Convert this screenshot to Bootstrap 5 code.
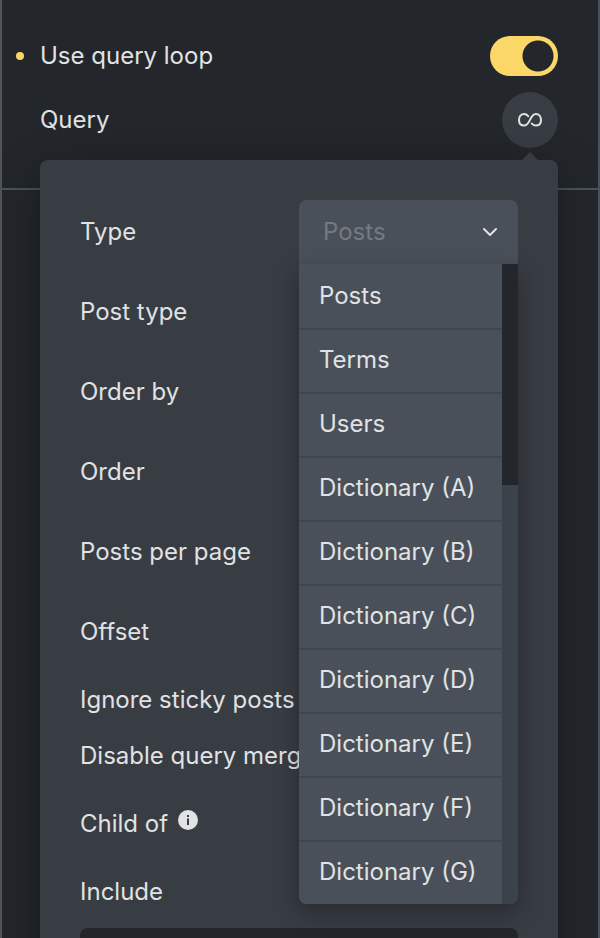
<!DOCTYPE html>
<html lang="en">
<head>
<meta charset="utf-8">
<meta name="viewport" content="width=device-width, initial-scale=1">
<title>Query loop settings</title>
<link href="https://cdn.jsdelivr.net/npm/bootstrap@5.3.0/dist/css/bootstrap.min.css" rel="stylesheet">
<style>
  :root { --ink: #e0e2e4; --base: #23272b; --raised: #383c43; --field: #495059; --line: #49525c; --accent: #fad766; }
  body { background: var(--base); color: var(--ink); font: 400 24px/32px Inter, "Liberation Sans", sans-serif; font-optical-sizing: none; }
  .panel { background: linear-gradient(#50555a, #50555a) left / 2px 100% no-repeat; border-right: 2px solid var(--line); }
  .panel-head { padding: 36px 40px 40px 40px; border-bottom: 2px solid var(--line); gap: 16px; }
  .marker { width: 8px; height: 8px; border-radius: 50%; background: var(--accent); left: -24px; top: 12px; }
  .toggle.form-check-input { width: 68px; height: 40px; margin: 0; border: 0; border-radius: 20px; background: radial-gradient(circle 16px at calc(100% - 20px) 50%, var(--base) 15px, transparent 16px) var(--accent); }
  .toggle.form-check-input:not(:checked) { background: radial-gradient(circle 16px at 20px 50%, var(--base) 15px, transparent 16px) var(--field); }
  .btn-query { width: 56px; height: 56px; background: var(--raised); color: var(--ink); }
  .btn-query:hover { background: var(--field); color: var(--ink); }
  .pop { top: 100%; left: 0; right: 0; margin-top: 12px; padding: 40px; gap: 16px; border-radius: 8px; background: var(--raised); box-shadow: 0 8px 40px rgba(0,0,0,.35); z-index: 2; }
  .pop::before { content: ""; position: absolute; right: 20px; bottom: 100%; border: 8px solid transparent; border-top: 0; border-bottom-color: var(--raised); }
  .tall { height: 64px; }
  .short { height: 40px; }
  .with-info { gap: 10px; }
  .type-select.form-select { height: 64px; padding: 0 56px 0 24px; border: 0; border-radius: 8px 8px 0 0; background: var(--field); color: #747a82; font-size: 24px; line-height: 32px; }
  .chevron { right: 20px; top: 24px; pointer-events: none; }
  .menu { top: 100%; left: 0; right: 0; border-radius: 0 0 8px 8px; overflow: hidden; background: var(--field); box-shadow: 0 8px 24px rgba(0,0,0,.3); z-index: 3; }
  .menu .list-group-item { height: 64px; padding: 0 20px; border: 0; background: var(--field); color: var(--ink); }
  .menu .list-group-item + .list-group-item { box-shadow: inset 0 2px #41474f; }
  .track { width: 16px; background: #3a424a; }
  .thumb { height: 221px; background: var(--base); }
  .include.form-control { height: 64px; border: 0; border-radius: 8px; background: var(--base); color: var(--ink); }
</style>
</head>
<body>
<main class="panel vh-100 overflow-hidden">
  <section class="panel-head d-flex flex-column">
    <div class="d-flex align-items-center justify-content-between">
      <label class="position-relative" for="loop"><span class="marker position-absolute"></span>Use query loop</label>
      <input class="toggle form-check-input" type="checkbox" role="switch" id="loop" checked>
    </div>
    <div class="position-relative d-flex align-items-center justify-content-between">
      <span id="queryLabel">Query</span>
      <button class="btn btn-query rounded-circle border-0 p-0 d-flex align-items-center justify-content-center" type="button" aria-labelledby="queryLabel" aria-expanded="true">
        <svg width="26" height="16" viewBox="0 0 26 16" fill="none" stroke="currentColor" stroke-width="2" stroke-linecap="round" aria-hidden="true"><path d="M11.2 4.2C9.9 2.7 8.7 2.1 7.2 2.1C4 2.1 2 4.6 2 8S4 13.6 7.2 13.6C13 13.6 13 2.1 18.8 2.1C22 2.1 24 4.6 24 8S22 13.6 18.8 13.6C17.3 13.6 16.1 13 14.8 11.6"/></svg>
      </button>
      <div class="pop position-absolute d-flex flex-column">
        <div class="row g-0 tall align-items-center">
          <label class="col-6" for="type">Type</label>
          <div class="col-6 position-relative">
            <select class="type-select form-select" id="type"><option>Posts</option><option>Terms</option><option>Users</option></select>
            <svg class="chevron position-absolute" width="16" height="16" viewBox="0 0 16 16" fill="none" stroke="currentColor" stroke-width="2" stroke-linecap="round" stroke-linejoin="round" aria-hidden="true"><path d="M2 5l6 6 6-6"/></svg>
            <div class="menu position-absolute d-flex">
              <div class="list-group list-group-flush flex-grow-1">
                <button type="button" class="list-group-item list-group-item-action">Posts</button>
                <button type="button" class="list-group-item list-group-item-action">Terms</button>
                <button type="button" class="list-group-item list-group-item-action">Users</button>
                <button type="button" class="list-group-item list-group-item-action">Dictionary (A)</button>
                <button type="button" class="list-group-item list-group-item-action">Dictionary (B)</button>
                <button type="button" class="list-group-item list-group-item-action">Dictionary (C)</button>
                <button type="button" class="list-group-item list-group-item-action">Dictionary (D)</button>
                <button type="button" class="list-group-item list-group-item-action">Dictionary (E)</button>
                <button type="button" class="list-group-item list-group-item-action">Dictionary (F)</button>
                <button type="button" class="list-group-item list-group-item-action">Dictionary (G)</button>
              </div>
              <div class="track flex-shrink-0"><div class="thumb"></div></div>
            </div>
          </div>
        </div>
        <div class="tall d-flex align-items-center">Post type</div>
        <div class="tall d-flex align-items-center">Order by</div>
        <div class="tall d-flex align-items-center">Order</div>
        <div class="tall d-flex align-items-center">Posts per page</div>
        <div class="tall d-flex align-items-center">Offset</div>
        <div class="short d-flex align-items-center text-nowrap">Ignore sticky posts</div>
        <div class="short d-flex align-items-center text-nowrap">Disable query merge</div>
        <div class="tall with-info d-flex align-items-center">Child of
          <svg class="mb-2" width="20" height="20" viewBox="0 0 20 20" aria-hidden="true"><circle cx="10" cy="10" r="10" fill="#e0e2e4"/><path d="M9 5h2v2H9zM9 8.5h2V15H9z" fill="#383c43"/></svg>
        </div>
        <label class="short d-flex align-items-center" for="include">Include</label>
        <input class="include form-control" id="include" type="text">
      </div>
    </div>
  </section>
</main>
<script src="https://cdn.jsdelivr.net/npm/bootstrap@5.3.0/dist/js/bootstrap.bundle.min.js"></script>
</body>
</html>
